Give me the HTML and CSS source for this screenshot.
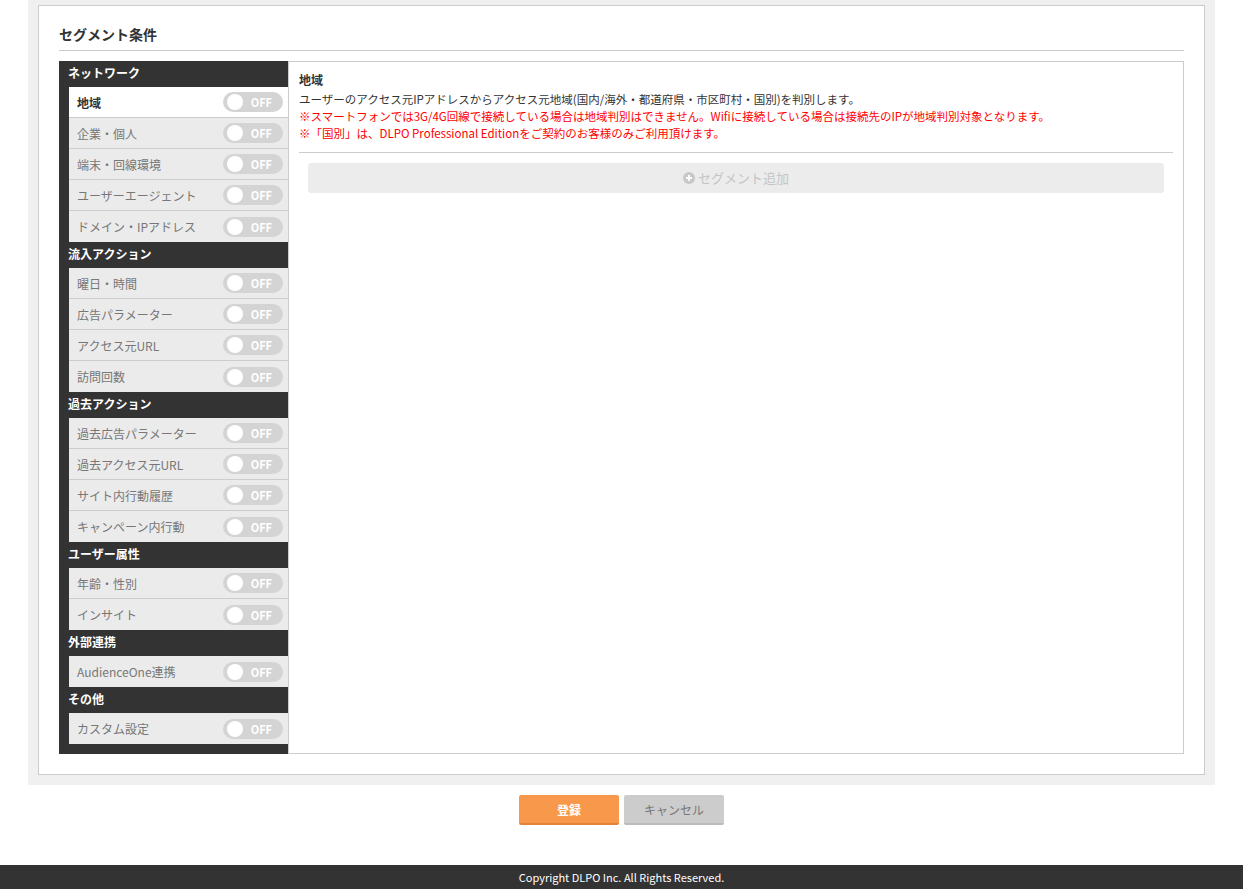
FILE: index.html
```html
<!DOCTYPE html>
<html lang="ja">
<head>
    <meta charset="UTF-8">
    <title>セグメント条件</title>
    <link rel="stylesheet" href="styles.css">
</head>
<body>
    <div class="wrap">
        <div class="panel">
            <div class="card">
                <h2 class="card-title">セグメント条件</h2>
                <div class="segment">
                    <div class="side">
                        <div class="side-head">ネットワーク</div>
                        <div class="side-item active"><span>地域</span><span class="toggle">OFF</span></div>
                        <div class="side-item"><span>企業・個人</span><span class="toggle">OFF</span></div>
                        <div class="side-item"><span>端末・回線環境</span><span class="toggle">OFF</span></div>
                        <div class="side-item"><span>ユーザーエージェント</span><span class="toggle">OFF</span></div>
                        <div class="side-item"><span>ドメイン・IPアドレス</span><span class="toggle">OFF</span></div>

                        <div class="side-head">流入アクション</div>
                        <div class="side-item"><span>曜日・時間</span><span class="toggle">OFF</span></div>
                        <div class="side-item"><span>広告パラメーター</span><span class="toggle">OFF</span></div>
                        <div class="side-item"><span>アクセス元URL</span><span class="toggle">OFF</span></div>
                        <div class="side-item"><span>訪問回数</span><span class="toggle">OFF</span></div>

                        <div class="side-head">過去アクション</div>
                        <div class="side-item"><span>過去広告パラメーター</span><span class="toggle">OFF</span></div>
                        <div class="side-item"><span>過去アクセス元URL</span><span class="toggle">OFF</span></div>
                        <div class="side-item"><span>サイト内行動履歴</span><span class="toggle">OFF</span></div>
                        <div class="side-item"><span>キャンペーン内行動</span><span class="toggle">OFF</span></div>

                        <div class="side-head">ユーザー属性</div>
                        <div class="side-item"><span>年齢・性別</span><span class="toggle">OFF</span></div>
                        <div class="side-item"><span>インサイト</span><span class="toggle">OFF</span></div>

                        <div class="side-head">外部連携</div>
                        <div class="side-item"><span>AudienceOne連携</span><span class="toggle">OFF</span></div>

                        <div class="side-head">その他</div>
                        <div class="side-item"><span>カスタム設定</span><span class="toggle">OFF</span></div>
                    </div>
                    <div class="detail">
                        <h3 class="detail-title">地域</h3>
                        <p>ユーザーのアクセス元IPアドレスからアクセス元地域(国内/海外・都道府県・市区町村・国別)を判別します。</p>
                        <p class="note">※スマートフォンでは3G/4G回線で接続している場合は地域判別はできません。Wifiに接続している場合は接続先のIPが地域判別対象となります。</p>
                        <p class="note">※「国別」は、DLPO Professional Editionをご契約のお客様のみご利用頂けます。</p>
                        <div class="add-btn">
                            <svg width="12" height="12" viewBox="0 0 12 12"><circle cx="6" cy="6" r="6" fill="#c8c8c8"/><path d="M6 3v6M3 6h6" stroke="#fff" stroke-width="2"/></svg>
                            セグメント追加
                        </div>
                    </div>
                </div>
            </div>
        </div>
    </div>
    <div class="actions">
        <button class="btn btn-save">登録</button>
        <button class="btn btn-cancel">キャンセル</button>
    </div>
    <footer class="footer">Copyright DLPO Inc. All Rights Reserved.</footer>
</body>
</html>
```

FILE: styles.css
```css
body {
    margin: 0;
    padding: 0;
    background-color: #fff;
    color: #333;
    font-family: "Noto Sans CJK JP", "Noto Sans", sans-serif;
    font-size: 12px;
}
.wrap {
    padding: 0 28px;
}
.panel {
    background-color: #f0f0f0;
    padding: 5px 10px 10px;
}
.card {
    background-color: #fff;
    border: 1px solid #ccc;
    padding: 0 20px 20px;
}
.card-title {
    margin: 0 0 10px;
    padding: 19px 0 7px;
    font-size: 14px;
    line-height: 18px;
    border-bottom: 1px solid #ccc;
}
.segment {
    display: flex;
}
.side {
    width: 229px;
    flex-shrink: 0;
    background-color: #333;
    padding-bottom: 10px;
}
.side-head {
    height: 26px;
    line-height: 24px;
    padding-left: 9px;
    color: #fff;
    font-weight: bold;
}
.side-item {
    display: flex;
    justify-content: space-between;
    align-items: center;
    margin-left: 10px;
    height: 30px;
    padding: 0 5px 0 8px;
    background-color: #ebebeb;
    color: #777;
    border-bottom: 1px solid #ccc;
}
.side-item:last-child,
.side-item:has(+ .side-head) {
    border-bottom: none;
    height: 31px;
}
.side-item.active {
    background-color: #fff;
    color: #333;
    font-weight: bold;
}
.toggle {
    position: relative;
    width: 60px;
    height: 20px;
    line-height: 20px;
    border-radius: 10px;
    background-color: #d4d4d4;
    color: #fff;
    font-size: 11px;
    font-weight: bold;
    text-align: right;
    padding-right: 11px;
    box-sizing: border-box;
}
.toggle::before {
    content: "";
    position: absolute;
    left: 4px;
    top: 2px;
    width: 16px;
    height: 16px;
    border-radius: 50%;
    background-color: #fff;
}
.detail {
    flex: 1;
    border: 1px solid #ccc;
    padding: 9px 10px 0;
    min-height: 680px;
}
.detail-title {
    margin: 0 0 2px;
    font-size: 12px;
    line-height: 18px;
}
.detail p {
    margin: 0;
    line-height: 17px;
    font-size: 11.5px;
}
.detail p.note {
    color: #f00;
}
.detail p.note:last-of-type {
    padding-bottom: 10px;
    border-bottom: 1px solid #ccc;
    margin-bottom: 10px;
}
.add-btn {
    margin: 0 9px;
    height: 30px;
    line-height: 30px;
    background-color: #ececec;
    border-radius: 3px;
    color: #c4c4c4;
    font-size: 13px;
    text-align: center;
}
.add-btn svg {
    vertical-align: -1px;
}
.actions {
    display: flex;
    justify-content: center;
    gap: 5px;
    padding: 10px 0 40px;
}
.btn {
    width: 100px;
    height: 30px;
    border: none;
    border-radius: 2px;
    font-family: inherit;
    font-size: 12px;
}
.btn-save {
    background-color: #f7984a;
    border-bottom: 2px solid #e5823a;
    color: #fff;
    font-weight: bold;
}
.btn-cancel {
    background-color: #ccc;
    border-bottom: 2px solid #bbb;
    color: #777;
}
.footer {
    background-color: #333;
    color: #fff;
    text-align: center;
    height: 24px;
    line-height: 24px;
    font-size: 11px;
}
```
